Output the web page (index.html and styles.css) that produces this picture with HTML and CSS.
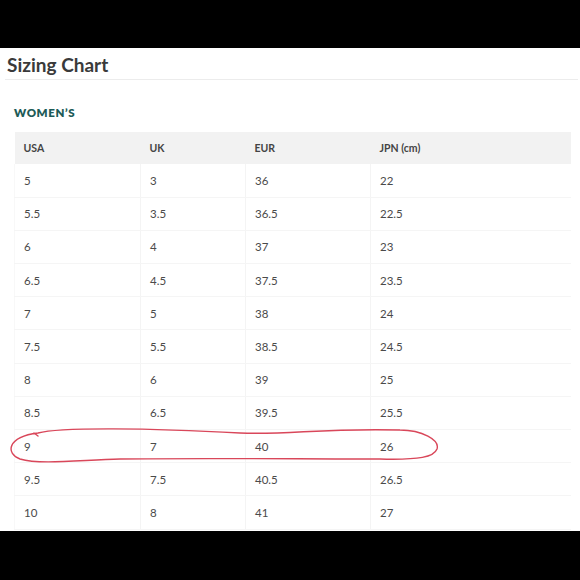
FILE: index.html
```html
<!DOCTYPE html>
<html>
<head>
<meta charset="utf-8">
<link rel="stylesheet" href="styles.css">
</head>
<body>
<div class="page">
  <h1 class="title">Sizing Chart</h1>
  <div class="section">
    <h2 class="label">WOMEN’S</h2>
    <table class="chart">
      <colgroup><col class="c1"><col class="c2"><col class="c3"><col class="c4"></colgroup>
      <thead>
        <tr><th>USA</th><th>UK</th><th>EUR</th><th>JPN (cm)</th></tr>
      </thead>
      <tbody>
        <tr><td>5</td><td>3</td><td>36</td><td>22</td></tr>
        <tr><td>5.5</td><td>3.5</td><td>36.5</td><td>22.5</td></tr>
        <tr><td>6</td><td>4</td><td>37</td><td>23</td></tr>
        <tr><td>6.5</td><td>4.5</td><td>37.5</td><td>23.5</td></tr>
        <tr><td>7</td><td>5</td><td>38</td><td>24</td></tr>
        <tr><td>7.5</td><td>5.5</td><td>38.5</td><td>24.5</td></tr>
        <tr><td>8</td><td>6</td><td>39</td><td>25</td></tr>
        <tr><td>8.5</td><td>6.5</td><td>39.5</td><td>25.5</td></tr>
        <tr><td>9</td><td>7</td><td>40</td><td>26</td></tr>
        <tr><td>9.5</td><td>7.5</td><td>40.5</td><td>26.5</td></tr>
        <tr><td>10</td><td>8</td><td>41</td><td>27</td></tr>
      </tbody>
    </table>
  </div>
  <svg class="scribble" width="580" height="483" viewBox="0 48 580 483">
    <path d="M 38 433 C 60 427, 150 428, 240 433 C 290 435, 320 428, 400 430 C 422 430, 440 440, 437 449 C 434 457, 420 460, 380 459 C 300 459, 200 458, 120 459 C 80 460, 40 465, 20 459 C 6 454, 6 437, 38 433 Z M 34 433 L 38 436" fill="none" stroke="#d9475a" stroke-width="1.4" stroke-linecap="round" stroke-linejoin="round"/>
  </svg>
</div>
</body>
</html>
```

FILE: styles.css
```css
html, body {
  margin: 0;
  padding: 0;
}
body {
  background: #000;
  width: 580px;
  height: 580px;
  overflow: hidden;
  font-family: "Lato", "Open Sans", sans-serif;
}
.page {
  position: relative;
  margin-top: 48px;
  height: 483px;
  background: #fff;
  overflow: hidden;
}
.title {
  margin: 0 2px 0 5px;
  padding: 6px 0 0 2px;
  height: 25px;
  font-size: 19px;
  line-height: 22px;
  font-weight: 700;
  color: #3a3a3a;
  border-bottom: 1px solid #ececec;
}
.section {
  padding: 0 10px 0 14px;
}
.label {
  margin: 0;
  padding-top: 26px;
  height: 26px;
  font-size: 11.5px;
  line-height: 14px;
  font-weight: 800;
  letter-spacing: 0.6px;
  color: #1d5b57;
}
.chart {
  width: 556px;
  border-collapse: collapse;
  table-layout: fixed;
}
.c1 { width: 126px; }
.c2 { width: 105px; }
.c3 { width: 125px; }
.c4 { width: 200px; }
.chart th {
  height: 32px;
  padding: 0 0 0 9px;
  background: #f2f2f2;
  text-align: left;
  font-size: 10.5px;
  font-weight: 700;
  color: #444;
}
.chart td {
  height: 33.2px;
  padding: 0 0 0 9px;
  font-size: 11.5px;
  color: #4a4a4a;
  box-sizing: border-box;
  border-bottom: 1px solid #f5f5f5;
  border-left: 1px solid #f4f4f4;
}
.chart td:first-child {
  border-left: 1px solid #f8f8f8;
}
.scribble {
  position: absolute;
  left: 0;
  top: 0;
  pointer-events: none;
}
```
